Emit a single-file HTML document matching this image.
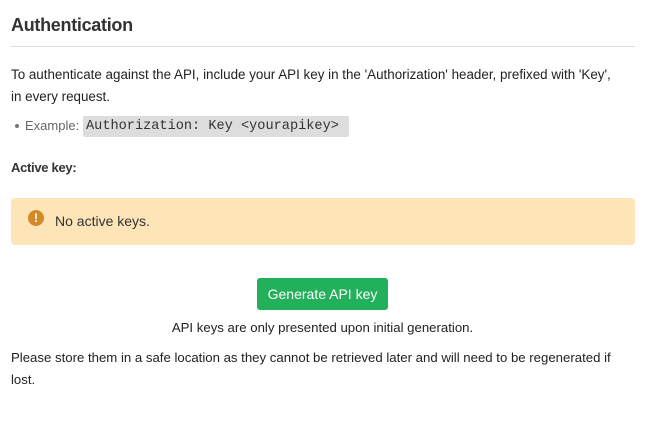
<!DOCTYPE html>
<html><head><style>
body{margin:0;width:645px;height:421px;background:#fff;font-family:"Liberation Sans",sans-serif;color:#222;position:relative;overflow:hidden}
.a{position:absolute;white-space:nowrap}
</style></head><body>
<div class="a" style="left:11px;top:15px;font-size:18px;font-weight:bold;color:#333;letter-spacing:-0.3px">Authentication</div>
<div class="a" style="left:11px;top:46px;width:624px;height:1px;background:#ddd"></div>
<div class="a" style="left:11px;top:64px;font-size:13.4px;line-height:22px">To authenticate against the API, include your API key in the 'Authorization' header, prefixed with 'Key',<br>in every request.</div>
<div class="a" style="left:15px;top:124px;width:4px;height:4px;border-radius:50%;background:#777"></div>
<div class="a" style="left:25px;top:118px;font-size:13px;color:#666">Example:</div>
<div class="a" style="left:83px;top:116px;width:266px;height:21px;background:#ddd;border-radius:2px"></div>
<div class="a" style="left:86px;top:117px;font-family:'Liberation Mono',monospace;font-size:13.6px;line-height:19px;color:#333">Authorization: Key &lt;yourapikey&gt;</div>
<div class="a" style="left:11px;top:160px;font-size:13px;font-weight:bold;color:#333;letter-spacing:-0.3px">Active key:</div>
<div class="a" style="left:11px;top:198px;width:624px;height:47px;background:#fde5b8;border-radius:4px"></div>
<div class="a" style="left:28px;top:210px;width:16px;height:16px;border-radius:50%;background:#d38a26;color:#fff;font-size:12px;font-weight:bold;text-align:center;line-height:16px">!</div>
<div class="a" style="left:55px;top:213px;font-size:14px;color:#333">No active keys.</div>
<div class="a" style="left:257px;top:278px;width:131px;height:32px;background:#22b05a;border-radius:3px;color:#fff;font-size:14px;text-align:center;line-height:32px">Generate API key</div>
<div class="a" style="left:0;width:645px;text-align:center;top:320px;font-size:13.2px">API keys are only presented upon initial generation.</div>
<div class="a" style="left:11px;top:347px;font-size:13.2px;line-height:22px">Please store them in a safe location as they cannot be retrieved later and will need to be regenerated if<br>lost.</div>
</body></html>
